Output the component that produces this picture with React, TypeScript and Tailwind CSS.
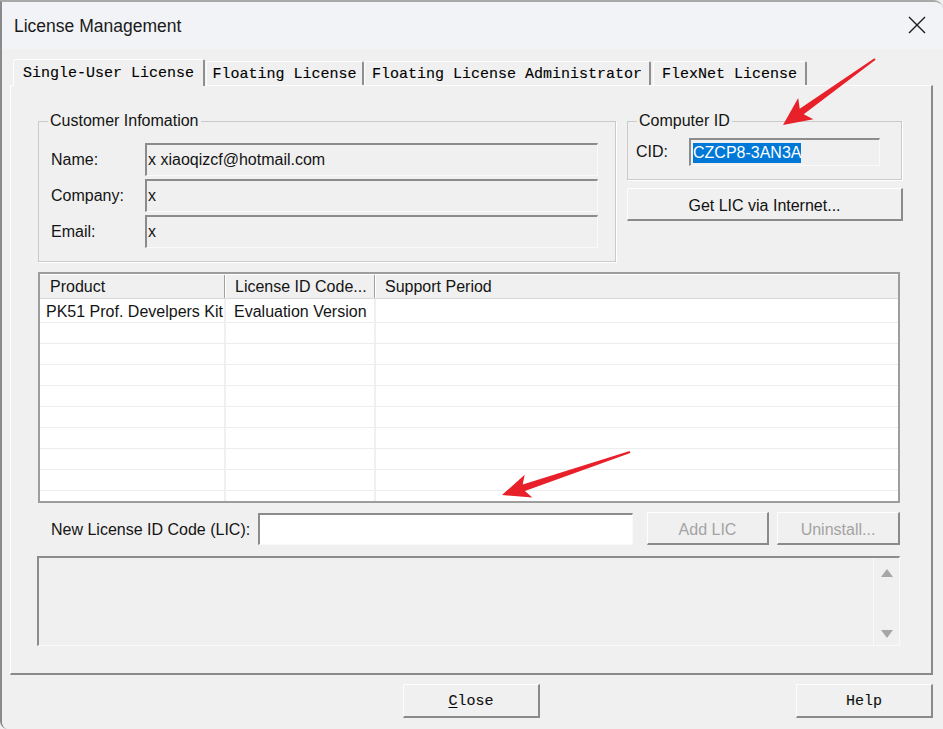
import React from "react";

const sunken =
  "border-t-2 border-l-2 border-b border-r border-t-[#8c8c8c] border-l-[#8c8c8c] border-b-[#fafafa] border-r-[#fafafa]";
const raised =
  "border-t border-l border-r-2 border-b-2 border-t-[#fdfdfd] border-l-[#fdfdfd] border-r-[#8a8a8a] border-b-[#8a8a8a]";

function Tab({ label, selected, w, ml }: { label: string; selected?: boolean; w: string; ml: string }) {
  return (
    <div
      className={`${w} ${ml} flex items-center justify-center pt-[3px] rounded-t-[2px] border-t border-l border-r-2 border-t-[#fdfdfd] border-l-[#fdfdfd] border-r-[#8f8f8f] bg-[#f0f0f0] font-['Liberation_Mono','Courier_New',monospace] text-[15px] text-black [-webkit-text-stroke:0.12px_#000] ${
        selected ? "relative z-10 h-[27px] -mb-px" : "h-[24px]"
      }`}
    >
      {label}
    </div>
  );
}

function Field({ label, value, labelW, inputW, h }: { label: string; value: string; labelW: string; inputW: string; h: string }) {
  return (
    <div className="flex items-center">
      <div className={`${labelW} shrink-0 pt-[1px]`}>{label}</div>
      <div className={`${inputW} ${h} ${sunken} bg-[#f0f0f0] flex items-center pl-px`}>{value}</div>
    </div>
  );
}

function Btn({ children, cls, disabled }: { children: React.ReactNode; cls: string; disabled?: boolean }) {
  return (
    <div className={`${cls} ${raised} bg-[#f0f0f0] flex items-center justify-center pt-[3px] ${disabled ? "text-[#a3a3a3]" : "text-[#111]"}`}>
      {children}
    </div>
  );
}

export default function App() {
  const rows = Array.from({ length: 10 });
  return (
    <div className="relative w-[943px] h-[729px] overflow-hidden bg-[#f0f0f0] font-['Liberation_Sans',Arial,sans-serif] text-[16px] text-[#141414]">
      <div className="flex flex-col w-full h-full border-l-2 border-t-2 border-l-[#8a8a8a] border-t-[#a8a8a8] rounded-tr-[9px] rounded-bl-[8px] overflow-hidden">
        {/* title bar */}
        <div className="h-[47px] shrink-0 bg-[#f2f3f7] flex items-center justify-between pl-[12px] pr-[16px]">
          <div className="text-[17.5px] text-[#1a1a1a] pt-[1px]">License Management</div>
          <svg width="20" height="20" viewBox="0 0 20 20" className="mb-[1px]">
            <path d="M2 2 L18 18 M18 2 L2 18" stroke="#1c1c1c" strokeWidth="1.4" fill="none" />
          </svg>
        </div>

        {/* body */}
        <div className="flex-1 flex flex-col pl-[8px] pr-[10px] pt-[10px] bg-[#f0f0f0]">
          {/* tabs */}
          <div className="flex items-end h-[26px]">
            <Tab label="Single-User License" selected w="w-[192px]" ml="ml-[3px]" />
            <Tab label="Floating License" w="w-[158px]" ml="ml-[1px]" />
            <Tab label="Floating License Administrator" w="w-[287px]" ml="ml-0" />
            <Tab label="FlexNet License" w="w-[154px]" ml="ml-[2px]" />
          </div>

          {/* panel */}
          <div className="h-[590px] border-t border-l border-r-2 border-b-2 border-t-[#fdfdfd] border-l-[#fdfdfd] border-r-[#8a8a8a] border-b-[#8a8a8a] pl-[27px] pt-[26px]">
            {/* top row */}
            <div className="flex items-start gap-[11px]">
              <fieldset className="w-[578px] border border-[#cacaca] shadow-[1px_1px_0_#fff]">
                <legend className="ml-[9px] px-[2px] leading-[18px]">Customer Infomation</legend>
                <div className="flex flex-col gap-[3px] pt-[13px] pb-[13px] pl-[12px]">
                  <Field label="Name:" value="x xiaoqizcf@hotmail.com" labelW="w-[94px]" inputW="w-[453px]" h="h-[33px]" />
                  <Field label="Company:" value="x" labelW="w-[94px]" inputW="w-[453px]" h="h-[33px]" />
                  <Field label="Email:" value="x" labelW="w-[94px]" inputW="w-[453px]" h="h-[33px]" />
                </div>
              </fieldset>

              <div className="w-[276px] flex flex-col">
                <fieldset className="w-[275px] border border-[#cacaca] shadow-[1px_1px_0_#fff]">
                  <legend className="ml-[9px] px-[2px] leading-[18px]">Computer ID</legend>
                  <div className="flex items-center pt-[8px] pb-[13px] pl-[8px]">
                    <div className="w-[53px] shrink-0">CID:</div>
                    <div className={`w-[191px] h-[28px] ${sunken} bg-[#f0f0f0] flex items-center pl-[2px]`}>
                      <span className="bg-[#0078d7] text-white leading-[20px]">CZCP8-3AN3A</span>
                    </div>
                  </div>
                </fieldset>
                <Btn cls="mt-[8px] w-[276px] h-[33px]">Get LIC via Internet...</Btn>
              </div>
            </div>

            {/* list view */}
            <div className="mt-[10px] w-[862px] h-[231px] border-2 border-[#9d9d9d] bg-white overflow-hidden">
              <div className="flex h-[25px] bg-[#f0f0f0] border-t border-t-white border-b border-b-[#d8d8d8]">
                <div className="w-[185px] shrink-0 pl-[10px] pt-[1px] flex items-center border-r border-r-[#a0a0a0]">Product</div>
                <div className="w-[150px] shrink-0 pl-[9px] pt-[1px] flex items-center border-r border-r-[#a0a0a0] border-l border-l-white">License ID Code...</div>
                <div className="flex-1 pl-[9px] pt-[1px] flex items-center border-l border-l-white">Support Period</div>
              </div>
              <div className="flex h-[24px] border-b border-b-[#ededed]">
                <div className="w-[186px] shrink-0 pl-[6px] pt-[2px] flex items-center border-r-2 border-r-[#f0f0f0] whitespace-nowrap">PK51 Prof. Develpers Kit</div>
                <div className="w-[150px] shrink-0 pl-[8px] pt-[2px] flex items-center border-r-2 border-r-[#f0f0f0]">Evaluation Version</div>
                <div className="flex-1" />
              </div>
              {rows.map((_, i) => (
                <div key={i} className="flex h-[21px] border-b border-b-[#ededed]">
                  <div className="w-[186px] shrink-0 border-r-2 border-r-[#f0f0f0]" />
                  <div className="w-[150px] shrink-0 border-r-2 border-r-[#f0f0f0]" />
                  <div className="flex-1" />
                </div>
              ))}
            </div>

            {/* LIC row */}
            <div className="mt-[9px] flex items-center h-[33px]">
              <div className="w-[220px] shrink-0 pl-[13px] pt-[3px]">New License ID Code (LIC):</div>
              <div className={`w-[375px] h-[32px] ${sunken} bg-white`} />
              <Btn cls="ml-[14px] w-[122px] h-[33px]" disabled>Add LIC</Btn>
              <Btn cls="ml-[8px] w-[123px] h-[33px]" disabled>Uninstall...</Btn>
            </div>

            {/* output box */}
            <div className={`mt-[11px] -ml-px w-[863px] h-[90px] ${sunken} bg-[#f0f0f0] flex justify-end`}>
              <div className="w-[26px] h-full border-l border-l-[#fafafa] flex flex-col items-center justify-between pt-[11px] pb-[7px]">
                <svg width="12" height="8" viewBox="0 0 12 8">
                  <path d="M6 0 L12 8 L0 8 Z" fill="#a6a6a6" />
                </svg>
                <svg width="12" height="8" viewBox="0 0 12 8">
                  <path d="M0 0 L12 0 L6 8 Z" fill="#a6a6a6" />
                </svg>
              </div>
            </div>
          </div>

          {/* bottom buttons */}
          <div className="mt-[9px] flex">
            <Btn cls="ml-[393px] w-[137px] h-[34px] font-['Liberation_Mono','Courier_New',monospace] text-[15px] [-webkit-text-stroke:0.12px_#000]">
              <span>
                <span className="underline underline-offset-2">C</span>lose
              </span>
            </Btn>
            <Btn cls="ml-auto w-[137px] h-[34px] font-['Liberation_Mono','Courier_New',monospace] text-[15px] [-webkit-text-stroke:0.12px_#000]">Help</Btn>
          </div>
        </div>
      </div>

      {/* annotation arrows */}
      <svg className="absolute inset-0 pointer-events-none" width="943" height="729" viewBox="0 0 943 729">
        <polygon
          points="783,125 813.4,119.2 803.7,114.3 875.6,59.8 874.4,58.2 799.7,108.7 798.2,98"
          fill="#e8202a"
        />
        <polygon
          points="502,495 532.3,497.5 524.9,491 630.3,452.9 629.7,451.1 522.7,484.4 524.7,474.7"
          fill="#e8202a"
        />
      </svg>
    </div>
  );
}
